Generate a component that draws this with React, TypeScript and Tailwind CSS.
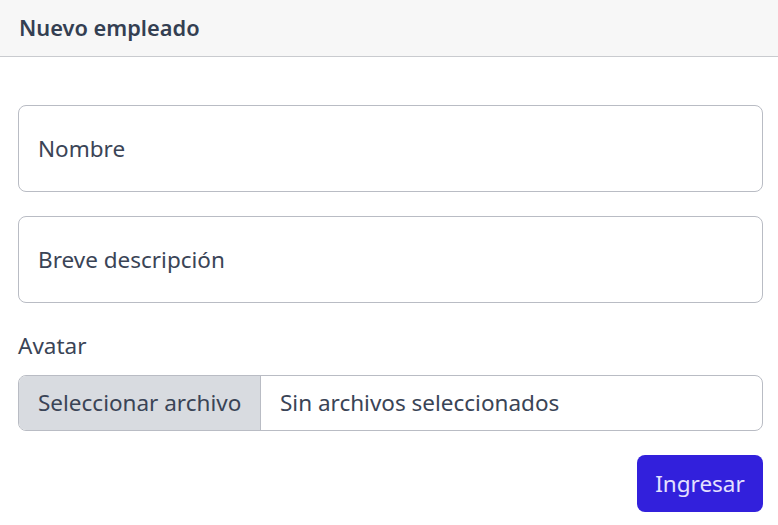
export default function App() {
  return (
    <div className="w-[778px] h-[525px] bg-white overflow-hidden text-[#343f52]" style={{ fontFamily: '"Noto Sans", "Open Sans", sans-serif' }}>
      <div className="h-[57px] bg-[#f7f7f7] border-b border-[#c9cbcf] flex items-center px-[19px]">
        <h1 className="text-[21.8px] font-semibold text-[#343f52]">Nuevo empleado</h1>
      </div>
      <form className="pl-[18px] pr-[15px] pt-[48px] flex flex-col">
        <div className="h-[87px] border border-[#b9bcc4] rounded-[8px] flex items-center px-[19px] text-[22.5px] text-[#3a4456]">
          Nombre
        </div>
        <div className="mt-[24px] h-[87px] border border-[#b9bcc4] rounded-[8px] flex items-center px-[19px] text-[22.5px] text-[#3a4456]">
          Breve descripción
        </div>
        <label className="mt-[28px] text-[22.5px] leading-[30px] text-[#3a4456]">Avatar</label>
        <div className="mt-[14px] h-[56px] border border-[#b9bcc4] rounded-[8px] flex overflow-hidden text-[22.5px] text-[#3a4456]">
          <div className="w-[242px] bg-[#d8dbe0] border-r border-[#b9bcc4] flex items-center px-[19px] whitespace-nowrap">
            Seleccionar archivo
          </div>
          <div className="flex items-center px-[19px]">Sin archivos seleccionados</div>
        </div>
        <div className="mt-[24px] flex justify-end">
          <button type="button" className="w-[126px] h-[57px] bg-[#3220dc] rounded-[8px] text-[22.5px] text-[#e4e0ff]">
            Ingresar
          </button>
        </div>
      </form>
    </div>
  );
}
